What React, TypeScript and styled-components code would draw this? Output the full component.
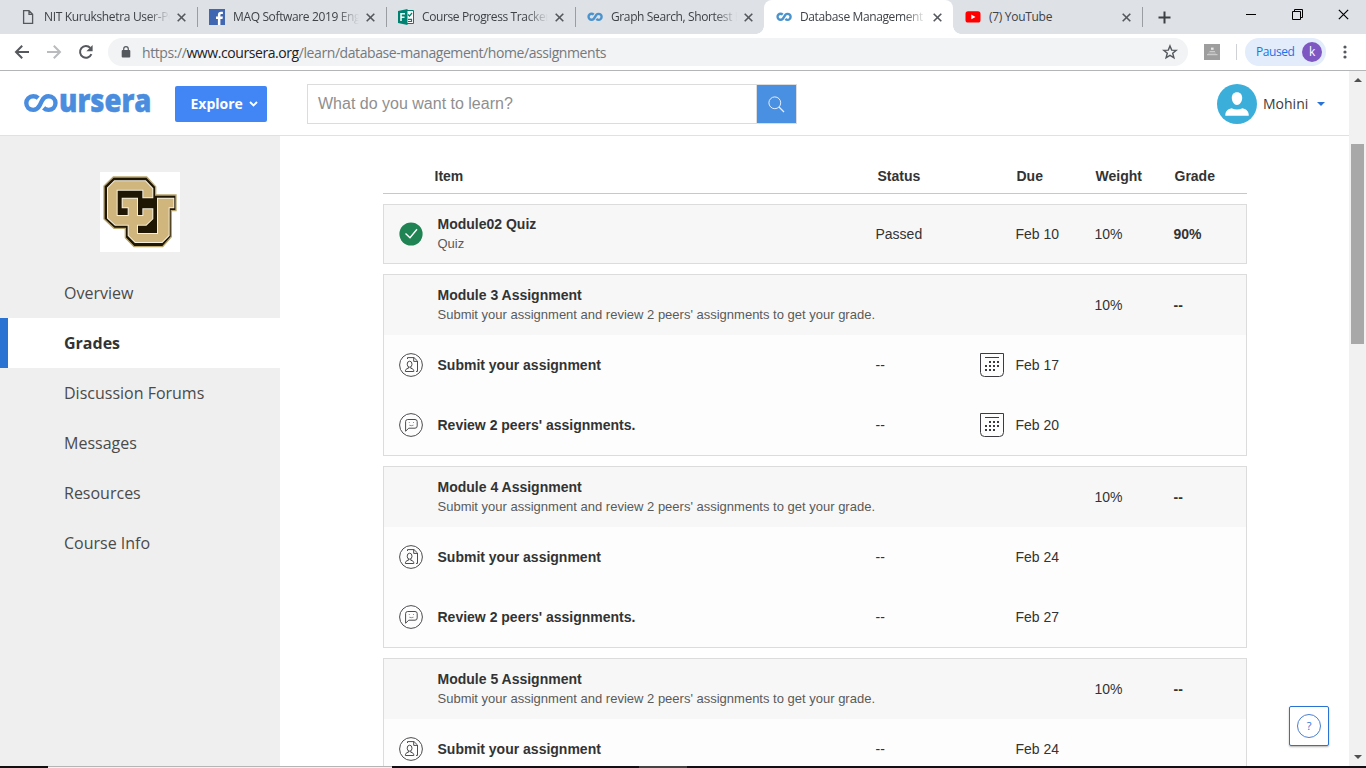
import React from "react";
import styled, { createGlobalStyle } from "styled-components";

const GlobalStyle = createGlobalStyle`
  *, *::before, *::after { box-sizing: border-box; }
  body { margin: 0; background: #fff; }
`;

const ui = `"Open Sans", "Noto Sans", sans-serif`;
const arial = `"Liberation Sans", Arial, sans-serif`;

const Screen = styled.div`
  position: relative;
  display: flex;
  flex-direction: column;
  width: 1366px;
  height: 768px;
  overflow: hidden;
  background: #fff;
  font-family: ${arial};
  color: #333;
  svg { display: block; flex: none; }
`;

/* ---------- browser chrome ---------- */
const TabStrip = styled.div`
  display: flex;
  flex: none;
  height: 34px;
  padding-left: 8px;
  background: #dee1e6;
`;

const Tab = styled.div<{ $active?: boolean; $line?: boolean }>`
  position: relative;
  display: flex;
  align-items: center;
  width: 189px;
  height: 34px;
  padding: 0 9px 0 12px;
  border-radius: 8px 8px 0 0;
  background: ${(p) => (p.$active ? "#fff" : "transparent")};
  &::after {
    content: "";
    position: absolute;
    right: -1px;
    top: 7px;
    width: 1px;
    height: 20px;
    background: ${(p) => (p.$line ? "#9a9da2" : "transparent")};
  }
`;

const TabFoot = styled.i<{ $side: "left" | "right" }>`
  position: absolute;
  bottom: 0;
  ${(p) => p.$side}: -8px;
  width: 8px;
  height: 8px;
  background: radial-gradient(circle at ${(p) => (p.$side === "left" ? "0 0" : "100% 0")}, #dee1e6 7.5px, #fff 8px);
`;

const TabIcon = styled.span`
  display: flex;
  justify-content: center;
  width: 16px;
  margin-right: 8px;
`;

const TabTitle = styled.span<{ $spacing: number; $fade: boolean }>`
  flex: 1;
  overflow: hidden;
  white-space: nowrap;
  font: 12px/18px ${ui};
  letter-spacing: ${(p) => p.$spacing}px;
  color: #3f4247;
  -webkit-mask-image: ${(p) => (p.$fade ? "linear-gradient(90deg, #000 calc(100% - 22px), transparent)" : "none")};
`;

const TabClose = styled.span`
  display: flex;
  justify-content: flex-end;
  width: 18px;
  padding-right: 2px;
`;

const NewTab = styled.span`
  display: flex;
  align-items: center;
  width: 40px;
  padding-left: 16px;
`;

const WindowButtons = styled.div`
  display: flex;
  align-items: center;
  gap: 35px;
  height: 29px;
  margin-left: auto;
  padding-right: 17px;
`;

const Toolbar = styled.div`
  display: flex;
  flex: none;
  align-items: center;
  height: 37px;
  padding: 0 12px 0 14px;
  border-bottom: 1px solid #b4b5b7;
  background: #fff;
`;

const NavButtons = styled.div`
  display: flex;
  flex: none;
  gap: 16px;
  width: 94px;
`;

const Omnibox = styled.div`
  display: flex;
  flex: none;
  align-items: center;
  width: 1080px;
  height: 28px;
  margin-right: 16px;
  padding: 0 10px 0 13px;
  border-radius: 14px;
  background: #f1f3f4;
`;

const Url = styled.span`
  flex: 1;
  margin-left: 11px;
  padding-top: 1px;
  font: 14px/20px ${ui};
  letter-spacing: -0.42px;
  color: #75797e;
  b { font-weight: 400; color: #202124; }
`;

const ToolDivider = styled.span`
  flex: none;
  width: 1px;
  height: 16px;
  margin: 0 8px 0 16px;
  background: #cfd1d4;
`;

const Profile = styled.div`
  display: flex;
  flex: none;
  align-items: center;
  justify-content: space-between;
  width: 81px;
  height: 28px;
  margin-right: 16.5px;
  padding: 0 4px 0 11px;
  border-radius: 14px;
  background: #e2ecfb;
  font: 12px/18px ${ui};
  letter-spacing: -0.45px;
  color: #1a73e8;
`;

const ProfileBadge = styled.span`
  width: 20px;
  height: 20px;
  border-radius: 50%;
  background: #7e57c2;
  color: #fff;
  text-align: center;
  line-height: 19px;
`;

/* ---------- page ---------- */
const Viewport = styled.div`
  display: flex;
  flex: none;
  height: 695px;
  overflow: hidden;
`;

const Page = styled.div`
  flex: 1;
  min-width: 0;
`;

const Header = styled.header`
  display: flex;
  align-items: center;
  height: 65px;
  padding: 0 24px 0 24px;
  border-bottom: 1px solid #e1e1e1;
`;

const Explore = styled.div`
  display: flex;
  align-items: center;
  justify-content: space-between;
  width: 92px;
  height: 36px;
  margin: 2px 40px 0 23px;
  padding: 0 9px 0 15.5px;
  border-radius: 2px;
  background: #4285f4;
  color: #fff;
  font: 700 14px/20px ${ui};
`;

const SearchBox = styled.div`
  display: flex;
  width: 490px;
  height: 40px;
  margin-top: 2px;
  border: 1px solid #dcdcdc;
`;

const SearchText = styled.span`
  flex: 1;
  padding-left: 10px;
  font: 16px/38px ${arial};
  color: #8f8f8f;
`;

const SearchButton = styled.span`
  display: flex;
  align-items: center;
  justify-content: center;
  width: 40px;
  padding-right: 1px;
  border-left: 1px solid #dcdcdc;
  background: #4a90e2;
`;

const User = styled.div`
  display: flex;
  align-items: center;
  margin: 2px 0 0 auto;
  font: 14px/20px ${ui};
  color: #3a3a3a;
`;

const UserName = styled.span`
  width: 54px;
  margin-left: 6px;
`;

const Body = styled.div`
  display: flex;
  height: 630px;
`;

const Sidebar = styled.nav`
  display: flex;
  flex-direction: column;
  width: 280px;
  padding-top: 36px;
  background: #efefef;
`;

const School = styled.div`
  margin: 0 auto 16px;
`;

const MenuItem = styled.a<{ $active?: boolean }>`
  height: 50px;
  padding-left: ${(p) => (p.$active ? 56 : 64)}px;
  border-left: ${(p) => (p.$active ? "8px solid #2a73d2" : "none")};
  background: ${(p) => (p.$active ? "#fff" : "transparent")};
  font: ${(p) => (p.$active ? 700 : 400)} 16px/50px ${ui};
  color: ${(p) => (p.$active ? "#333" : "#4a4a4a")};
`;

const Main = styled.main`
  width: 864px;
  margin-left: 103px;
`;

const TableHead = styled.div`
  display: grid;
  grid-template-columns: 51.5px 443px 139px 79px 79px 1fr;
  height: 58px;
  padding-top: 22px;
  border-bottom: 1px solid #c8c8c8;
  font: 700 14px/36px ${arial};
`;

const Card = styled.section`
  margin-top: 10px;
  border: 1px solid #dcdcdc;
  background: #fdfdfd;
`;

const Row = styled.div<{ $tone?: "quiz" | "module" }>`
  display: grid;
  grid-template-columns: 53.5px 438px 104.5px 35.5px 79px 79px 1fr;
  align-items: center;
  height: ${(p) => (p.$tone === "quiz" ? 58 : 60)}px;
  background: ${(p) => (p.$tone ? "#f7f7f7" : "transparent")};
  font: 14px/20px ${arial};
`;

const IconCell = styled.span`
  padding-left: 15px;
`;

const Title = styled.div`
  font-weight: 700;
`;

const Heading = styled.div`
  display: flex;
  flex-direction: column;
  height: 40px;
  font-weight: 700;
  line-height: 20px;
`;

const Note = styled.div`
  font-size: 13px;
  font-weight: 400;
  line-height: 19px;
  color: #5a5a5a;
`;

const Grade = styled.span`
  font-weight: 700;
`;

/* ---------- scrollbar, help, task bar ---------- */
const Scrollbar = styled.div`
  display: flex;
  flex-direction: column;
  align-items: center;
  width: 17px;
  padding: 7px 0 7px;
  background: #f1f1f1;
`;

const Thumb = styled.div`
  width: 13px;
  height: 200px;
  margin: 62px 0 auto;
  background: #a8a8a8;
`;

const Help = styled.button`
  position: absolute;
  left: 1289px;
  top: 706px;
  display: flex;
  align-items: center;
  justify-content: center;
  width: 40px;
  height: 40px;
  padding: 0;
  border: 1px solid #2a73d2;
  border-radius: 2px;
  background: #fff;
  box-shadow: 0 1px 2px rgba(0, 0, 0, 0.3);
`;

const HelpMark = styled.span`
  width: 24px;
  height: 24px;
  border: 1px solid #4a80d2;
  border-radius: 50%;
  font: 11px/22px ${ui};
  color: #2a73d2;
`;

const TaskEdge = styled.div`
  display: flex;
  flex: none;
  height: 2px;
`;

const EdgePart = styled.span<{ $w: number; $c: string; $top?: string }>`
  width: ${(p) => p.$w}px;
  border-top: ${(p) => (p.$top ? `1px solid ${p.$top}` : "none")};
  background: ${(p) => p.$c};
`;

/* ---------- drawings ---------- */
const CloseMark = ({ size = 9, color = "#54575b", w = 1.6 }) => (
  <svg width={size} height={size} viewBox="0 0 9 9" stroke={color} strokeWidth={w}>
    <path d="M.7 .7 8.3 8.3M8.3 .7 .7 8.3" />
  </svg>
);

const PageMark = () => (
  <svg width="12" height="14" viewBox="0 0 12 14" fill="none" stroke="#55585d" strokeWidth="1.3">
    <path d="M1.6 .7H7L10.6 4.3V13.3H1.6ZM7 .7V4.3H10.6" />
  </svg>
);

const FacebookMark = () => (
  <svg width="16" height="16" viewBox="0 0 16 16">
    <rect width="16" height="16" fill="#4267b2" />
    <path fill="#fff" d="M8.9 16V10H7V7.6H8.9V6C8.9 3.9 10.1 2.8 12 2.8H13.9V5H12.6C11.7 5 11.4 5.4 11.4 6.2V7.6H13.9L13.5 10H11.4V16Z" />
  </svg>
);

const FormsMark = () => (
  <svg width="16" height="16" viewBox="0 0 16 16" fill="none">
    <path fill="#fff" stroke="#008272" d="M8 1.5H15.5V14.5H8Z" />
    <path fill="#008272" d="M0 2 9.5 0V16L0 14Z" />
    <path stroke="#fff" strokeWidth="1.5" d="M3 12V4.7H7M3 8.2H6.5" />
    <path stroke="#008272" strokeWidth="1.2" d="M10 5.5 11.5 7 14 4M10 10.3H13.5V12.5H10" />
  </svg>
);

const LoopMark = () => (
  <svg width="16" height="10" viewBox="0 0 16 10" fill="none" stroke="#4b93cd" strokeWidth="2.4">
    <path d="M6.7 2.7A3 3 0 1 0 6.7 6.9L9.4 2.8A3 3 0 1 1 9.4 6.9" />
  </svg>
);

const YouTubeMark = () => (
  <svg width="16" height="12" viewBox="0 0 16 12">
    <rect x=".5" y=".3" width="15" height="11.2" rx="2.6" fill="#f00" />
    <path d="M6.3 3.5V8.3L10.5 5.9Z" fill="#fff" />
  </svg>
);

const BackArrow = ({ color }: { color: string }) => (
  <svg width="16" height="16" viewBox="0 0 16 16" fill="none" stroke={color} strokeWidth="2">
    <path d="M15 8H2.5M8.2 1.8 2 8 8.2 14.2" />
  </svg>
);

const ForwardArrow = ({ color }: { color: string }) => (
  <svg width="16" height="16" viewBox="0 0 16 16" fill="none" stroke={color} strokeWidth="2">
    <path d="M1 8H13.5M7.8 1.8 14 8 7.8 14.2" />
  </svg>
);

const Reload = () => (
  <svg width="16" height="16" viewBox="0 0 16 16">
    <path fill="none" stroke="#55585d" strokeWidth="2" d="M13.4 10.2A5.9 5.9 0 1 1 12.3 3.9" />
    <path fill="#55585d" d="M14.6 1V7.2H8.4Z" />
  </svg>
);

const Lock = () => (
  <svg width="10" height="12" viewBox="0 0 10 12">
    <rect x=".7" y="4" width="8.6" height="7.4" rx="1" fill="#55585d" />
    <path d="M2.7 4.6V3A2.3 2.3 0 0 1 7.3 3V4.6" fill="none" stroke="#55585d" strokeWidth="1.2" />
  </svg>
);

const Star = () => (
  <svg width="16" height="16" viewBox="0 0 16 16" fill="none" stroke="#55585d" strokeWidth="1.4">
    <path d="M8 1.9 9.7 6.1 14.2 6.4 10.7 9.3 11.9 13.8 8 11.3 4.1 13.8 5.3 9.3 1.8 6.4 6.3 6.1Z" />
  </svg>
);

const ExtensionMark = () => (
  <svg width="16" height="16" viewBox="0 0 16 16">
    <rect width="16" height="16" fill="#9e9e9e" />
    <rect x="7" y="3.6" width="2.6" height="2.2" fill="#e8e8e8" />
    <path d="M5.5 7.7H11M3 10.7H13.5" stroke="#d5d5d5" />
    <path d="M4 9.2H12" stroke="#b5b5b5" />
  </svg>
);

const MenuDots = () => (
  <svg width="4" height="14" viewBox="0 0 4 14" fill="#55585d">
    <circle cx="2" cy="2" r="1.6" />
    <circle cx="2" cy="7" r="1.6" />
    <circle cx="2" cy="12" r="1.6" />
  </svg>
);

const Wordmark = () => (
  <svg width="128" height="26" viewBox="0 0 128 26">
    <path
      d="M14.2 8.2C12.8 6.9 11.1 6.3 9.2 6.3C5.2 6.3 2.3 9.3 2.3 13.1S5.2 19.9 9.2 19.9C12.2 19.9 14.2 18.3 15.6 15.6L17.9 10.9C19.4 7.9 21.4 6.3 24.6 6.3C28.6 6.3 31.5 9.3 31.5 13.1S28.6 19.9 24.6 19.9C22.6 19.9 20.9 19.2 19.6 17.9"
      fill="none"
      stroke="#4a8ddf"
      strokeWidth="4.4"
    />
    <text
      x="35"
      y="22"
      textLength="92.5"
      lengthAdjust="spacingAndGlyphs"
      fontFamily={ui}
      fontSize="31.5"
      fontWeight="800"
      fill="#4a8ddf"
      stroke="#4a8ddf"
      strokeWidth=".5"
    >
      ursera
    </text>
  </svg>
);

const SchoolLogo = () => {
  const c = "M44 28H136L157 50V76H130V53H50V132H130V112H157V140L138 158H46L24 138V48Z";
  const u = "M68 80H111V106H111V186H174V106V80H220V106H206V190L186 210H106L86 190V106H68Z";
  return (
    <svg width="80" height="80" viewBox="0 0 240 240">
      <rect width="240" height="240" fill="#fff" />
      <path
        d="M40 15H140L167 44V69H228V116H214V194L188 224H102L76 197V169H42L12 141V42Z"
        fill="#1f1604"
        stroke="#b9a66f"
        strokeWidth="4"
      />
      <path d={c + u} fill="none" stroke="#f5efe0" strokeWidth="6" />
      <path d={c} fill="#d0b67c" />
      <path d={u} fill="#d0b67c" />
    </svg>
  );
};

const Avatar = () => (
  <svg width="40" height="40" viewBox="0 0 40 40">
    <circle cx="20" cy="20" r="20" fill="#3bafda" />
    <path
      fill="#fff"
      d="M20 8.3C23.4 8.3 25.2 10.7 25.2 14 25.2 17.6 22.8 21 20 21S14.8 17.6 14.8 14C14.8 10.7 16.6 8.3 20 8.3ZM8.3 31.8C8.3 27.5 10 25.6 14.6 24.3 18 25.9 22 25.9 25.4 24.3 30 25.6 31.8 27.5 31.8 31.8Z"
    />
  </svg>
);

const PassedIcon = () => (
  <svg width="24" height="24" viewBox="0 0 24 24" fill="none">
    <circle cx="12" cy="12" r="11.6" fill="#1f8354" />
    <path d="M6.5 11.5 11 15.8 18 7.3" stroke="#fff" strokeWidth="1.4" />
  </svg>
);

const SubmitIcon = () => (
  <svg width="24" height="24" viewBox="0 0 24 24" fill="none" stroke="#4c4c50">
    <circle cx="12" cy="12" r="11.4" strokeWidth="1" />
    <path d="M8.5 6V4.6H15L18.5 8V18.4H17M14.7 4.8V8.4H18.3" />
    <ellipse cx="10.6" cy="11.2" rx="2.4" ry="3" />
    <path d="M9.4 14V15.3C7.2 15.8 6.4 16.4 6.4 18.5H14.8C14.8 16.4 14 15.8 11.8 15.3V14" />
  </svg>
);

const ReviewIcon = () => (
  <svg width="24" height="24" viewBox="0 0 24 24" fill="none" stroke="#4c4c50">
    <circle cx="12" cy="12" r="11.4" strokeWidth="1" />
    <path d="M6.6 18.2V8.6Q6.6 6.5 8.7 6.5H16Q18.2 6.5 18.2 8.6V12.9Q18.2 15.2 16 15.2H9.8Z" />
    <path d="M10.3 9V10M14.5 9V10M10.3 12.2Q12.4 13.2 14.5 12.2" strokeWidth=".6" />
  </svg>
);

const CalendarIcon = () => (
  <svg width="24" height="24" viewBox="0 0 24 24" fill="none" stroke="#3c3c40">
    <path d="M.5 .5H23.5V19.5Q23.5 23.5 19.5 23.5H4.5Q.5 23.5 .5 19.5Z" />
    <path d="M5 4.5H19" />
    <path strokeWidth="2" strokeDasharray="2 2" d="M9 9H19M5 13H19M5 17H15" />
  </svg>
);

/* ---------- content ---------- */
const tabs = [
  { title: "NIT Kurukshetra User-Po", icon: <PageMark />, line: true, spacing: -0.33 },
  { title: "MAQ Software 2019 Engi", icon: <FacebookMark />, line: true, spacing: -0.36 },
  { title: "Course Progress Tracker", icon: <FormsMark />, line: true, spacing: -0.38 },
  { title: "Graph Search, Shortest P", icon: <LoopMark />, spacing: -0.38 },
  { title: "Database Management E", icon: <LoopMark />, active: true, spacing: -0.38 },
  { title: "(7) YouTube", icon: <YouTubeMark />, line: true, spacing: -0.3 },
];

const menu = ["Overview", "Grades", "Discussion Forums", "Messages", "Resources", "Course Info"];

const modules = [
  { name: "Module 3 Assignment", submit: "Feb 17", review: "Feb 20", calendar: true },
  { name: "Module 4 Assignment", submit: "Feb 24", review: "Feb 27", calendar: false },
  { name: "Module 5 Assignment", submit: "Feb 24", review: "", calendar: false },
];

type TaskProps = { icon: React.ReactNode; label: string; due: string; calendar: boolean };

const TaskRow = ({ icon, label, due, calendar }: TaskProps) => (
  <Row>
    <IconCell>{icon}</IconCell>
    <Title>{label}</Title>
    <span>--</span>
    <span>{calendar && <CalendarIcon />}</span>
    <span>{due}</span>
  </Row>
);

export default function App() {
  return (
    <Screen>
      <GlobalStyle />
      <TabStrip>
        {tabs.map((t) => (
          <Tab key={t.title} $active={t.active} $line={t.line}>
            {t.active && <TabFoot $side="left" />}
            {t.active && <TabFoot $side="right" />}
            <TabIcon>{t.icon}</TabIcon>
            <TabTitle $spacing={t.spacing} $fade={t.title.length > 15}>{t.title}</TabTitle>
            <TabClose><CloseMark /></TabClose>
          </Tab>
        ))}
        <NewTab>
          <svg width="13" height="13" viewBox="0 0 13 13" stroke="#3c4043" strokeWidth="2">
            <path d="M6.5 .5V12.5M.5 6.5H12.5" />
          </svg>
        </NewTab>
        <WindowButtons>
          <svg width="11" height="11" viewBox="0 0 11 11" stroke="#000"><path d="M0 5.5H10" /></svg>
          <svg width="11" height="11" viewBox="0 0 11 11" fill="none" stroke="#000">
            <path d="M.5 2.5H8.5V10.5H.5ZM2.5 2.5V.5H10.5V8.5H8.5" />
          </svg>
          <CloseMark size={11} color="#000" w={1} />
        </WindowButtons>
      </TabStrip>
      <Toolbar>
        <NavButtons>
          <BackArrow color="#55585d" />
          <ForwardArrow color="#b9bbbe" />
          <Reload />
        </NavButtons>
        <Omnibox>
          <Lock />
          <Url>https://<b>www.coursera.org</b>/learn/database-management/home/assignments</Url>
          <Star />
        </Omnibox>
        <ExtensionMark />
        <ToolDivider />
        <Profile>Paused<ProfileBadge>k</ProfileBadge></Profile>
        <MenuDots />
      </Toolbar>

      <Viewport>
        <Page>
          <Header>
            <Wordmark />
            <Explore>
              Explore
              <svg width="9" height="6" viewBox="0 0 9 6" fill="none" stroke="#fff" strokeWidth="1.9"><path d="M1 1 4.5 4.4 8 1" /></svg>
            </Explore>
            <SearchBox>
              <SearchText>What do you want to learn?</SearchText>
              <SearchButton>
                <svg width="17" height="17" viewBox="0 0 17 17" fill="none" stroke="#e4eefb">
                  <circle cx="6.8" cy="6.8" r="5.9" />
                  <path d="M11 11 16 16" strokeWidth="1.3" />
                </svg>
              </SearchButton>
            </SearchBox>
            <User>
              <Avatar />
              <UserName>Mohini</UserName>
              <svg width="8" height="4" viewBox="0 0 8 4"><path d="M0 0H8L4 4Z" fill="#2a73d2" /></svg>
            </User>
          </Header>
          <Body>
            <Sidebar>
              <School><SchoolLogo /></School>
              {menu.map((m) => <MenuItem key={m} $active={m === "Grades"}>{m}</MenuItem>)}
            </Sidebar>
            <Main>
              <TableHead>
                <span /><span>Item</span><span>Status</span><span>Due</span><span>Weight</span><span>Grade</span>
              </TableHead>
              <Card>
                <Row $tone="quiz">
                  <IconCell><PassedIcon /></IconCell>
                  <Heading>Module02 Quiz<Note>Quiz</Note></Heading>
                  <span>Passed</span>
                  <span />
                  <span>Feb 10</span>
                  <span>10%</span>
                  <Grade>90%</Grade>
                </Row>
              </Card>
              {modules.map((m) => (
                <Card key={m.name}>
                  <Row $tone="module">
                    <span />
                    <Heading>
                      {m.name}
                      <Note>Submit your assignment and review 2 peers' assignments to get your grade.</Note>
                    </Heading>
                    <span /><span /><span />
                    <span>10%</span>
                    <Grade>--</Grade>
                  </Row>
                  <TaskRow icon={<SubmitIcon />} label="Submit your assignment" due={m.submit} calendar={m.calendar} />
                  {m.review && (
                    <TaskRow icon={<ReviewIcon />} label="Review 2 peers' assignments." due={m.review} calendar={m.calendar} />
                  )}
                </Card>
              ))}
            </Main>
          </Body>
        </Page>
        <Scrollbar>
          <svg width="8" height="4" viewBox="0 0 8 4"><path d="M0 4H8L4 0Z" fill="#4f4f4f" /></svg>
          <Thumb />
          <svg width="8" height="4" viewBox="0 0 8 4"><path d="M0 0H8L4 4Z" fill="#4f4f4f" /></svg>
        </Scrollbar>
      </Viewport>
      <TaskEdge>
        <EdgePart $w={48} $c="#101010" />
        <EdgePart $w={344} $c="#f2f2f2" $top="#b5b5b5" />
        <EdgePart $w={247} $c="#101014" />
        <EdgePart $w={48} $c="#444" />
        <EdgePart $w={679} $c="#101014" />
      </TaskEdge>
      <Help><HelpMark>?</HelpMark></Help>
    </Screen>
  );
}
